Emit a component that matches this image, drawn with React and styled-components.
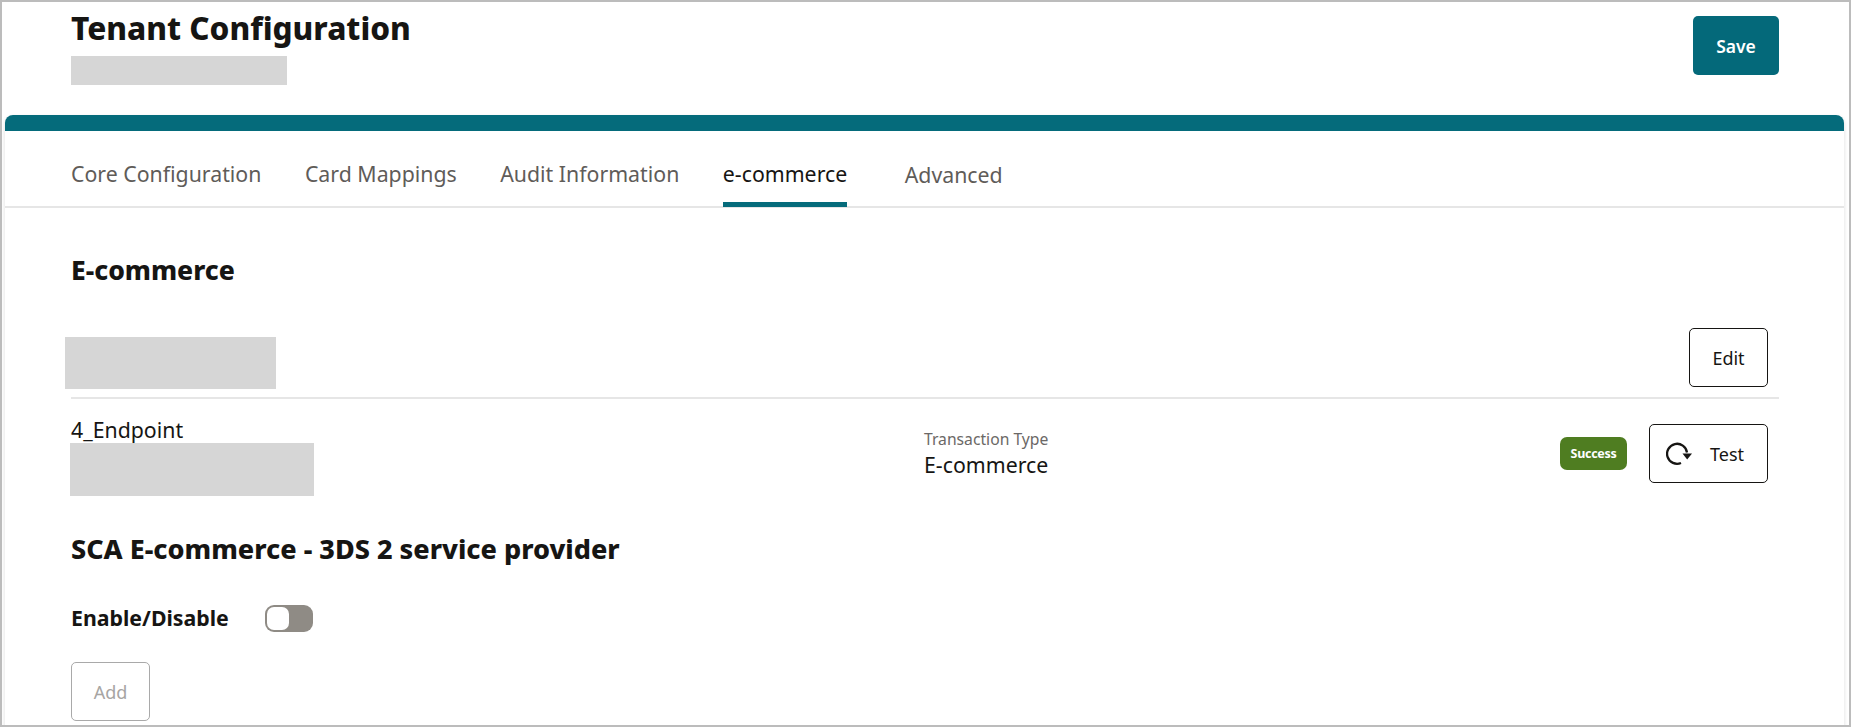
import React from "react";
import styled, { createGlobalStyle } from "styled-components";

const Global = createGlobalStyle`
  html, body { margin: 0; padding: 0; background: #fff; }
  body { font-family: "Noto Sans", "Open Sans", sans-serif; color: #161513; }
`;

const tabs = ["Core Configuration", "Card Mappings", "Audit Information", "e-commerce", "Advanced"];

function RefreshIcon() {
  return (
    <svg width="26" height="23" viewBox="0 0 26 23" fill="none">
      <path d="M15 21A10 10 0 1 1 21 10.500" stroke="#161513" strokeWidth="2.300" />
      <path d="M16.500 11.500h9.500l-4.800 6z" fill="#161513" />
    </svg>
  );
}

function App() {
  return (
    <>
      <Global />
      <Frame>
        <Header>
          <div>
            <Title>Tenant Configuration</Title>
            <Redacted $w={216} $h={29} />
          </div>
          <SaveButton>Save</SaveButton>
        </Header>
        <Card>
          <TabBar>
            {tabs.map((t) => (
              <Tab key={t} $active={t === "e-commerce"} $last={t === "Advanced"}>{t}</Tab>
            ))}
          </TabBar>
          <Content>
            <SectionTitle>E-commerce</SectionTitle>
            <EndpointHead>
              <Redacted $w={211} $h={52} $offset={-6} $top={9} />
              <OutlineButton>Edit</OutlineButton>
            </EndpointHead>
            <EndpointRow>
              <div>
                <EndpointName>4_Endpoint</EndpointName>
                <Redacted $w={244} $h={53} $offset={-1} />
              </div>
              <TypeBlock>
                <TypeLabel>Transaction Type</TypeLabel>
                <TypeValue>E-commerce</TypeValue>
              </TypeBlock>
              <RowActions>
                <Badge>Success</Badge>
                <OutlineButton $wide>
                  <RefreshIcon />
                  Test
                </OutlineButton>
              </RowActions>
            </EndpointRow>
            <ScaTitle>SCA E-commerce - 3DS 2 service provider</ScaTitle>
            <ToggleRow>
              <ToggleLabel>Enable/Disable</ToggleLabel>
              <Toggle />
            </ToggleRow>
            <AddButton>Add</AddButton>
          </Content>
        </Card>
      </Frame>
    </>
  );
}
export default App;

const Frame = styled.div`
  box-sizing: border-box;
  width: 1851px;
  height: 727px;
  border: 2px solid #bcbcbc;
  overflow: hidden;
  background: #fff;
`;

const Header = styled.header`
  box-sizing: border-box;
  height: 113px;
  padding: 14px 70px 0 69px;
  display: flex;
  justify-content: space-between;
  align-items: flex-start;
`;

const Title = styled.h1`
  margin: -8px 0 8px;
  font-size: 31.500px;
  line-height: 40px;
  font-weight: 800;
  color: #161513;
`;

const Redacted = styled.div`
  width: ${(p) => p.$w}px;
  height: ${(p) => p.$h}px;
  margin-left: ${(p) => p.$offset || 0}px;
  margin-top: ${(p) => p.$top || 0}px;
  background: #d6d6d6;
`;

const SaveButton = styled.button`
  width: 86px;
  height: 59px;
  border: none;
  border-radius: 5px;
  background: #04697a;
  color: #fff;
  font: 600 17.500px "Noto Sans", sans-serif;
`;

const Card = styled.section`
  margin: 0 5px 0 3px;
  height: 620px;
  border-top: 16px solid #056b7b;
  border-radius: 8px 8px 0 0;
  box-shadow: 0 2px 4px rgba(0, 0, 0, 0.14);
`;

const TabBar = styled.nav`
  box-sizing: border-box;
  height: 77px;
  padding: 0 0 0 66px;
  display: flex;
  gap: 43.500px;
  border-bottom: 2px solid #e6e6e6;
`;

const Tab = styled.div`
  box-sizing: border-box;
  height: 76px;
  display: flex;
  align-items: center;
  margin-left: ${(p) => (p.$last ? "14px" : 0)};
  padding-top: ${(p) => (p.$last ? "16px" : "14px")};
  font-size: 21.300px;
  color: ${(p) => (p.$active ? "#161513" : "#5f5c59")};
  border-bottom: 5px solid ${(p) => (p.$active ? "#056b7b" : "transparent")};
`;

const Content = styled.div`
  padding: 45px 65px 0 66px;
`;

const SectionTitle = styled.h2`
  margin: 0;
  font-size: 26.500px;
  line-height: 34px;
  font-weight: 800;
`;

const EndpointHead = styled.div`
  box-sizing: border-box;
  height: 110px;
  padding: 41px 11px 0 0;
  display: flex;
  justify-content: space-between;
  align-items: flex-start;
`;

const OutlineButton = styled.button`
  box-sizing: border-box;
  width: ${(p) => (p.$wide ? "119px" : "79px")};
  height: 59px;
  padding: ${(p) => (p.$wide ? "0 0 0 16px" : "0")};
  display: flex;
  align-items: center;
  justify-content: ${(p) => (p.$wide ? "flex-start" : "center")};
  gap: 18px;
  background: #fff;
  border: 1.5px solid #161513;
  border-radius: 5px;
  color: #161513;
  font: 400 18px "Noto Sans", sans-serif;
`;

const EndpointRow = styled.div`
  box-sizing: border-box;
  border-top: 2px solid #e6e6e6;
  display: grid;
  grid-template-columns: 853px 1fr auto;
  padding: 18px 11px 0 0;
`;

const EndpointName = styled.div`
  font-size: 21.300px;
  line-height: 28px;
  margin: -1px 0;
`;

const TypeBlock = styled.div`
  padding-top: 11px;
`;

const TypeLabel = styled.div`
  font-size: 15.700px;
  line-height: 22px;
  color: #6b6866;
`;

const TypeValue = styled.div`
  font-size: 21.300px;
  line-height: 29px;
`;

const RowActions = styled.div`
  display: flex;
  align-items: center;
  gap: 22px;
  height: 59px;
  margin-top: 7px;
`;

const Badge = styled.span`
  box-sizing: border-box;
  width: 67px;
  height: 33px;
  display: flex;
  align-items: center;
  justify-content: center;
  border-radius: 7px;
  background: #4f7d21;
  color: #fff;
  font-size: 12.500px;
  letter-spacing: -0.3px;
  font-weight: 700;
`;

const ScaTitle = styled.h2`
  margin: 36px 0 0;
  font-size: 27px;
  line-height: 34px;
  font-weight: 800;
`;

const ToggleRow = styled.div`
  display: flex;
  align-items: center;
  gap: 36px;
  margin-top: 38px;
`;

const ToggleLabel = styled.div`
  font-size: 21.300px;
  line-height: 28px;
  font-weight: 700;
`;

const Toggle = styled.div`
  box-sizing: border-box;
  width: 48px;
  height: 27px;
  padding: 2px;
  border-radius: 9px;
  background: #8f8b85;

  &::before {
    content: "";
    display: block;
    width: 22px;
    height: 23px;
    border-radius: 7px;
    background: #fff;
  }
`;

const AddButton = styled.button`
  box-sizing: border-box;
  display: block;
  width: 79px;
  height: 59px;
  margin-top: 30px;
  background: #fff;
  border: 1px solid #a9a9a9;
  border-radius: 5px;
  color: #a7a5a3;
  font: 400 18px "Noto Sans", sans-serif;
`;
